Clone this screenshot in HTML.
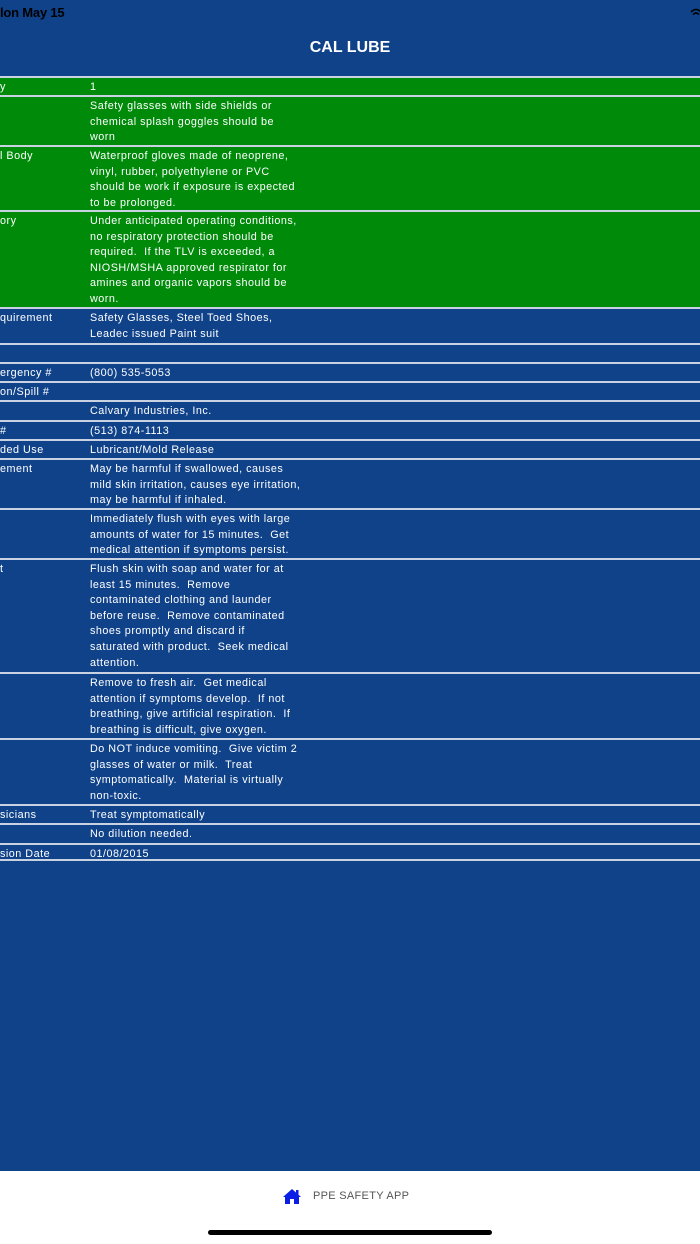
<!DOCTYPE html>
<html><head><style>
*{margin:0;padding:0;box-sizing:border-box}
body{width:700px;height:1244px;background:#10428a;position:relative;overflow:hidden;font-family:"Liberation Sans",sans-serif}
.st{position:absolute;left:0;top:5px;font-size:13px;font-weight:bold;color:#000;letter-spacing:-0.2px}
.ttl{position:absolute;top:39px;width:100%;text-align:center;color:#fff;font-size:16px;font-weight:bold}
.r{position:absolute;left:0;width:700px;border-top:2px solid #c9d2e2;color:#fff;font-size:10.8px;line-height:15.6px;letter-spacing:0.5px}
.g{background:#008a0a}
.l{position:absolute;left:0;top:2px;white-space:nowrap}
.v{position:absolute;left:90px;top:2px;white-space:nowrap}
.end{position:absolute;left:0;top:859px;width:700px;border-top:2px solid #c9d2e2}
.foot{position:absolute;left:0;top:1171px;width:700px;height:73px;background:#fff}
.ft{position:absolute;left:313px;top:19px;font-size:11px;color:#555;letter-spacing:0.3px}
.bar{position:absolute;left:208px;top:59px;width:284px;height:5px;border-radius:3px;background:#000}
</style></head><body>
<div class="st">lon May 15</div>
<svg style="position:absolute;left:690px;top:8px" width="12" height="10" viewBox="0 0 12 10"><path d="M1 4 Q6 -1 11 4" stroke="#000" stroke-width="1.6" fill="none"/><path d="M3 6.5 Q6 3.5 9 6.5" stroke="#000" stroke-width="1.6" fill="none"/></svg>
<div class="ttl">CAL LUBE</div>

<div class="r g" style="top:76px;height:19px"><div class="l">y</div><div class="v">1</div></div>
<div class="r g" style="top:95px;height:50px"><div class="l"></div><div class="v">Safety glasses with side shields or<br>chemical splash goggles should be<br>worn</div></div>
<div class="r g" style="top:145px;height:65px"><div class="l">l Body</div><div class="v">Waterproof gloves made of neoprene,<br>vinyl, rubber, polyethylene or PVC<br>should be work if exposure is expected<br>to be prolonged.</div></div>
<div class="r g" style="top:210px;height:97px"><div class="l">ory</div><div class="v">Under anticipated operating conditions,<br>no respiratory protection should be<br>required.&nbsp; If the TLV is exceeded, a<br>NIOSH/MSHA approved respirator for<br>amines and organic vapors should be<br>worn.</div></div>
<div class="r" style="top:307px;height:36px"><div class="l">quirement</div><div class="v">Safety Glasses, Steel Toed Shoes,<br>Leadec issued Paint suit</div></div>
<div class="r" style="top:343px;height:19px"></div>
<div class="r" style="top:362px;height:19px"><div class="l">ergency #</div><div class="v">(800) 535-5053</div></div>
<div class="r" style="top:381px;height:19px"><div class="l">on/Spill #</div><div class="v"></div></div>
<div class="r" style="top:400px;height:20px"><div class="l"></div><div class="v">Calvary Industries, Inc.</div></div>
<div class="r" style="top:420px;height:19px"><div class="l">#</div><div class="v">(513) 874-1113</div></div>
<div class="r" style="top:439px;height:19px"><div class="l">ded Use</div><div class="v">Lubricant/Mold Release</div></div>
<div class="r" style="top:458px;height:50px"><div class="l">ement</div><div class="v">May be harmful if swallowed, causes<br>mild skin irritation, causes eye irritation,<br>may be harmful if inhaled.</div></div>
<div class="r" style="top:508px;height:50px"><div class="l"></div><div class="v">Immediately flush with eyes with large<br>amounts of water for 15 minutes.&nbsp; Get<br>medical attention if symptoms persist.</div></div>
<div class="r" style="top:558px;height:114px"><div class="l">t</div><div class="v">Flush skin with soap and water for at<br>least 15 minutes.&nbsp; Remove<br>contaminated clothing and launder<br>before reuse.&nbsp; Remove contaminated<br>shoes promptly and discard if<br>saturated with product.&nbsp; Seek medical<br>attention.</div></div>
<div class="r" style="top:672px;height:66px"><div class="l"></div><div class="v">Remove to fresh air.&nbsp; Get medical<br>attention if symptoms develop.&nbsp; If not<br>breathing, give artificial respiration.&nbsp; If<br>breathing is difficult, give oxygen.</div></div>
<div class="r" style="top:738px;height:66px"><div class="l"></div><div class="v">Do NOT induce vomiting.&nbsp; Give victim 2<br>glasses of water or milk.&nbsp; Treat<br>symptomatically.&nbsp; Material is virtually<br>non-toxic.</div></div>
<div class="r" style="top:804px;height:19px"><div class="l">sicians</div><div class="v">Treat symptomatically</div></div>
<div class="r" style="top:823px;height:20px"><div class="l"></div><div class="v">No dilution needed.</div></div>
<div class="r" style="top:843px;height:18px"><div class="l">sion Date</div><div class="v">01/08/2015</div></div>
<div class="end"></div>

<div class="foot">
<svg style="position:absolute;left:282px;top:17px" width="20" height="17" viewBox="0 0 20 17"><path d="M10 1 L1 9 L3 9 L3 16 L8 16 L8 11 L12 11 L12 16 L17 16 L17 9 L19 9 Z" fill="#0a1ee6"/><rect x="14" y="2" width="2.5" height="5" fill="#0a1ee6"/></svg>
<div class="ft">PPE SAFETY APP</div>
<div class="bar"></div>
</div>
</body></html>
